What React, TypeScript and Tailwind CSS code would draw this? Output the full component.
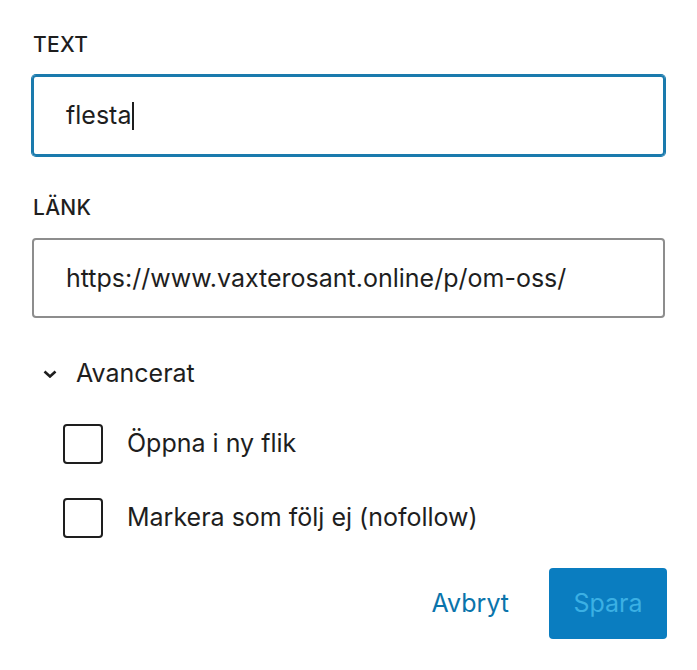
import React from "react";

export default function App() {
  const font = { fontFamily: "Inter, 'Liberation Sans', sans-serif" };
  return (
    <div className="w-[697px] h-[670px] bg-white text-[#1e1e1e]" style={font}>
      <div className="px-[32px] pt-[33px] flex flex-col">
        <div className="pl-[1px] text-[21px] font-medium uppercase leading-[24px] tracking-[0.3px]">Text</div>
        <div className="mt-[18px] h-[81px] rounded-[4px] border-2 border-[#1a7aad] ring-1 ring-[#1a7aad] flex items-center pl-[32px]">
          <span className="text-[25px] leading-none">flesta</span>
          <span className="w-[2px] h-[28px] bg-[#1e1e1e] ml-[1px]" />
        </div>
        <div className="mt-[40px] pl-[1px] text-[21px] font-medium uppercase leading-[24px] tracking-[0.3px]">Länk</div>
        <div className="mt-[18px] h-[80px] rounded-[4px] border-2 border-[#8d8d8d] flex items-center pl-[32px]">
          <span className="text-[25px] leading-none">https://www.vaxterosant.online/p/om-oss/</span>
        </div>
        <div className="mt-[41px] flex items-center h-[30px] pl-[11px]">
          <svg width="14" height="8" viewBox="0 0 14 8" className="mr-[19px]">
            <path d="M1.5 1.5 L7 6.5 L12.5 1.5" fill="none" stroke="#1e1e1e" strokeWidth="2.6" />
          </svg>
          <span className="text-[25px]">Avancerat</span>
        </div>
        <div className="mt-[35px] flex flex-col gap-[34px] pl-[31px]">
          <div className="flex items-center">
            <span className="w-[40px] h-[40px] rounded-[4px] border-2 border-[#1e1e1e]" />
            <span className="ml-[24px] text-[25px]">Öppna i ny flik</span>
          </div>
          <div className="flex items-center">
            <span className="w-[40px] h-[40px] rounded-[4px] border-2 border-[#1e1e1e]" />
            <span className="ml-[24px] text-[25px]">Markera som följ ej (nofollow)</span>
          </div>
        </div>
        <div className="mt-[30px] -mr-[2px] flex justify-end items-center gap-[40px]">
          <span className="text-[25px] text-[#0a74ab]">Avbryt</span>
          <button className="w-[118px] h-[71px] rounded-[4px] bg-[#0a7dc0] text-[#3bb0e4] text-[25px]" style={font}>Spara</button>
        </div>
      </div>
    </div>
  );
}
